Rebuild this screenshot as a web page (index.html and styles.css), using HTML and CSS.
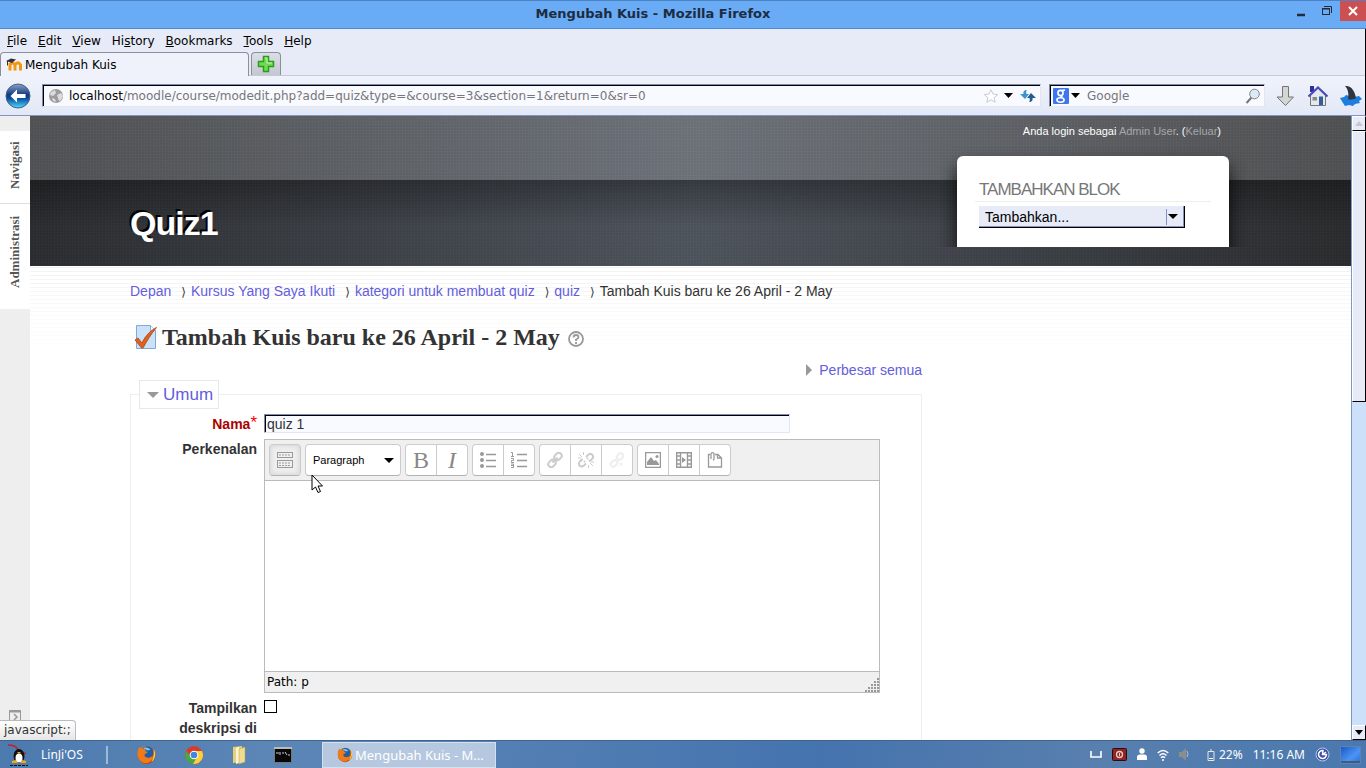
FILE: index.html
```
<!DOCTYPE html>
<html lang="id">
<head>
    <meta charset="UTF-8">
    <meta name="viewport" content="width=device-width, initial-scale=1.0">
    <title>Mengubah Kuis</title>
    <link rel="stylesheet" href="styles.css">
</head>
<body>
    <!-- shared icons -->
    <svg width="0" height="0" class="defs" aria-hidden="true">
        <defs>
            <radialGradient id="fox" cx="40%" cy="35%"><stop offset="0" stop-color="#ffd54a"/><stop offset=".6" stop-color="#f58a1f"/><stop offset="1" stop-color="#c8400c"/></radialGradient>
            <linearGradient id="blue" x1="0" y1="0" x2="0" y2="1"><stop offset="0" stop-color="#8fa3c4"/><stop offset=".45" stop-color="#0d3a83"/><stop offset=".6" stop-color="#0a4c9e"/><stop offset="1" stop-color="#4be0ff"/></linearGradient>
            <linearGradient id="screen" x1="0" y1="0" x2="1" y2="1"><stop offset="0" stop-color="#1a55c4"/><stop offset=".6" stop-color="#4c94f4"/><stop offset="1" stop-color="#2a6ad8"/></linearGradient>
            <symbol id="firefox" viewBox="0 0 20 20">
                <circle cx="10" cy="10" r="9" fill="url(#fox)"/>
                <circle cx="10.5" cy="7.5" r="6.3" fill="#1d5fa8"/>
                <path d="M7 3c3-1 6 0 7 2-2 0-3 1-4 0s-2 0-3-2z" fill="#7fc4ee"/>
                <path d="M2 4c0-1 1-2 1-2l2 2c2-1 4 0 4 2l2 1c0 2-3 1-3 3 0 3 5 4 8 1 1 2-1 6-5 7C5 19 1 14 1 9c0-2 0-4 1-5z" fill="#f07a18"/>
                <path d="M17 4c3 4 2 10-2 13 1-3 3-6 2-13z" fill="#ffcf3a"/>
            </symbol>
        </defs>
    </svg>

    <header class="titlebar">
        <h1 class="window-title">Mengubah Kuis - Mozilla Firefox</h1>
        <div class="window-buttons">
            <button class="win-btn" aria-label="Minimize"><svg width="12" height="12"><path d="M2 10h8" stroke="#222c38" stroke-width="2.5"/></svg></button>
            <button class="win-btn" aria-label="Restore"><svg width="12" height="12" fill="none" stroke="#222c38"><path d="M3 1.500h7.500V8"/><rect x="1.500" y="3.500" width="7" height="6"/><path d="M1 4h8"/></svg></button>
            <button class="win-btn close" aria-label="Close"><svg width="10" height="10"><path d="M1 1l8 8M9 1l-8 8" stroke="#fff" stroke-width="2"/></svg></button>
        </div>
    </header>

    <div class="chrome">
        <nav class="menubar">
            <a href="#"><u>F</u>ile</a>
            <a href="#"><u>E</u>dit</a>
            <a href="#"><u>V</u>iew</a>
            <a href="#">Hi<u>s</u>tory</a>
            <a href="#"><u>B</u>ookmarks</a>
            <a href="#"><u>T</u>ools</a>
            <a href="#"><u>H</u>elp</a>
        </nav>

        <div class="tabs">
            <div class="tab">
                <svg width="17" height="16" viewBox="0 0 17 16"><path d="M4 13.500V6M4 8q2.500-4 5 0V13.500M9 8q3-4.500 5.500 0V13.500" fill="none" stroke="#f2960f" stroke-width="3"/><path d="M0 4l5-2.500 5 1L6 6z" fill="#333"/><path d="M1.500 4v4.500" stroke="#333"/></svg>
                <span>Mengubah Kuis</span>
            </div>
            <button class="new-tab" aria-label="New tab"><svg width="18" height="18"><path d="M6.500 1.500h5v5h5v5h-5v5h-5v-5h-5v-5h5z" fill="#6fdc4f" stroke="#2c9c1c" stroke-width="1.500"/><path d="M8 3h2v5h5" fill="none" stroke="#c5f6b4"/></svg></button>
        </div>

        <div class="navbar">
            <button class="icon-btn" aria-label="Back"><svg width="26" height="26"><circle cx="13" cy="13" r="12" fill="url(#blue)" stroke="#4a5d85"/><path d="M12 6.500L5.500 13l6.500 6.500v-4.500h8.500v-4H12z" fill="#fff"/></svg></button>
            <div class="urlbar">
                <svg width="16" height="16"><circle cx="8" cy="8" r="7" fill="#9c9c9c"/><path d="M3 4l4-2 1 3-3 3-3-1zM9 7l4-2 2 3-2 4-2 1-1-3zM4 10l3 1 1 3-3-1z" fill="#dcdcdc"/></svg>
                <span class="url">localhost<span>/moodle/course/modedit.php?add=quiz&amp;type=&amp;course=3&amp;section=1&amp;return=0&amp;sr=0</span></span>
                <svg width="16" height="16" viewBox="0 0 18 17"><path d="M9 1.500l2.200 4.800 5.300.6-4 3.500 1.200 5.100L9 12.800l-4.700 2.700 1.200-5.100-4-3.500 5.300-.6z" fill="#fff" stroke="#c4c4c4"/></svg>
                <svg width="9" height="5"><path d="M0 0h9L4.500 5z"/></svg>
                <svg width="16" height="14" class="reload"><path d="M7 1C4 1 3 3 3.500 5H0l5 5 4-5H6.500C6 3 6 2 7 1z" fill="#3c93cf"/><path d="M9 13c3 0 4-2 3.500-4H16l-5-5-4 5h2.500c.5 2 .5 3-.5 4z" fill="#1f5b96"/></svg>
            </div>
            <div class="searchbar">
                <svg width="16" height="16"><rect width="16" height="16" rx="1" fill="#3f76ee"/><g fill="none" stroke="#fff" stroke-width="1.600"><circle cx="7.500" cy="5" r="2.600"/><path d="M9 2.600l3-.6M7.500 7.800l2 1.600"/><ellipse cx="7.500" cy="12" rx="3.600" ry="2.200"/></g></svg>
                <svg width="9" height="6"><path d="M0 0h9L4.500 5z"/></svg>
                <input type="text" placeholder="Google" aria-label="Search">
                <svg width="16" height="16"><path d="M6.500 9.500L1.500 15" stroke="#777" stroke-width="2"/><circle cx="9.500" cy="6" r="4.800" fill="#dceaf8" stroke="#888"/></svg>
            </div>
            <button class="icon-btn" aria-label="Downloads"><svg width="20" height="24"><path d="M6.500 2.500h6v10.500h5L9.500 21.500 1 13h5.500z" fill="#d4d6d4" stroke="#757575"/></svg></button>
            <button class="icon-btn" aria-label="Home"><svg width="22" height="22"><path d="M3.500 10v10.500h15V10L11 3z" fill="#e6e8ee" stroke="#777"/><path d="M3 1h4v6H3z" fill="#2f2f9c"/><path d="M1.500 11.500L11 2.500l9.500 9" fill="none" stroke="#4a4ab8" stroke-width="2.200"/><path d="M12 11.500h4v8.500h-4z" fill="#315f9c"/><path d="M5.500 12h4.500v3.500H5.500z" fill="#888"/></svg></button>
            <button class="icon-btn" aria-label="Shark"><svg width="22" height="22"><path d="M0 13l4-1 2-2 8 2 5-1 3 3-3 2 1 2-5 1-2 2-4-1-4 1-2-3z" fill="#1c7fe0"/><path d="M5 1c6-1 10 5 11 12-2 1.500-6 2-8 1C9 9 8 4 5 1z" fill="#30343c"/></svg></button>
        </div>
    </div>

    <div class="viewport">
        <aside class="dock">
            <button class="dock-item">Navigasi</button>
            <button class="dock-item">Administrasi</button>
            <svg class="dock-toggle" width="12" height="12"><path d="M.5.500h11v11H.5z" fill="none" stroke="#999"/><path d="M0 1.500h12" stroke="#999" stroke-width="2"/><path d="M5 4l3 3-3 3" fill="none" stroke="#999" stroke-width="1.500"/></svg>
        </aside>

        <main class="page">
            <div class="page-header">
                <div class="course">
                    <h2>Quiz1</h2>
                </div>
                <div class="header-side">
                    <p class="login">Anda login sebagai <a href="#">Admin User</a>. (<a href="#">Keluar</a>)</p>
                    <div class="block-wrap">
                        <section class="block">
                            <h3>TAMBAHKAN BLOK</h3>
                            <div class="block-select">
                                <select aria-label="Tambahkan blok"><option>Tambahkan...</option></select>
                            </div>
                        </section>
                    </div>
                </div>
            </div>

            <div class="content">
                <nav class="breadcrumb">
                    <a href="#">Depan</a><span>⟩</span><a href="#">Kursus Yang Saya Ikuti</a><span>⟩</span><a href="#">kategori untuk membuat quiz</a><span>⟩</span><a href="#">quiz</a><span>⟩</span>Tambah Kuis baru ke 26 April - 2 May
                </nav>

                <div class="heading">
                    <svg width="24" height="26"><path d="M2.500 1.500h14l5 5v18h-19z" fill="#c9e2f8" stroke="#7fa8dc"/><path d="M16.500 1.500v5h5" fill="#fff" stroke="#7fa8dc"/><path d="M1 16l3-2 4 5C11 12 17 6 22.500 3.500 17 10 13 17 9 24H7.500z" fill="#e0601c" stroke="#a8481c" stroke-width=".8"/></svg>
                    <h2>Tambah Kuis baru ke 26 April - 2 May</h2>
                    <svg width="16" height="16" class="help"><circle cx="8" cy="8" r="7" fill="#fff" stroke="#999" stroke-width="1.800"/><path d="M5.500 6.500q0-2.500 2.500-2.500t2.500 2.200Q10.500 7.500 8 8.500V10M8 11v2" fill="none" stroke="#999" stroke-width="1.800"/></svg>
                </div>

                <div class="expand"><svg width="6" height="12"><path d="M0 0l6 6-6 6z" fill="#999"/></svg><a href="#">Perbesar semua</a></div>

                <fieldset>
                    <legend><svg width="12" height="6"><path d="M0 0h12L6 6z" fill="#999"/></svg><a href="#">Umum</a></legend>

                    <div class="field">
                        <label class="required" for="name">Nama<sup>*</sup></label>
                        <input type="text" id="name" value="quiz 1">
                    </div>

                    <div class="field">
                        <label for="intro">Perkenalan</label>
                        <div class="editor">
                            <div class="toolbar">
                                <div class="group">
                                    <button class="pressed" aria-label="Toggle toolbar"><svg width="16" height="16" fill="none" stroke="#999"><rect x=".5" y=".5" width="15" height="5"/><rect x=".5" y="8.500" width="15" height="7"/><path d="M2 3h12M2 11h12M2 13.500h12" stroke-dasharray="2 1"/></svg></button>
                                </div>
                                <div class="group format">
                                    <select aria-label="Format"><option>Paragraph</option></select>
                                </div>
                                <div class="group">
                                    <button class="letter">B</button>
                                    <button class="letter"><i>I</i></button>
                                </div>
                                <div class="group">
                                    <button aria-label="Bullets"><svg width="16" height="16"><path d="M6 2.500h10M6 8.500h10M6 14.500h10" stroke="#999" stroke-width="1.500"/><g fill="#999"><circle cx="2" cy="2" r="2"/><circle cx="2" cy="8" r="2"/><circle cx="2" cy="14" r="2"/></g></svg></button>
                                    <button aria-label="Numbers"><svg width="16" height="16" fill="none" stroke="#999"><path d="M6 2.500h10M6 8.500h10M6 14.500h10" stroke-width="1.500"/><path d="M0 .5h1.500V4M0 4.500h3M0 6.500h2.500v2H.5v2H3M0 12h2.500v3.500H0M0 13.500h2"/></svg></button>
                                </div>
                                <div class="group">
                                    <button aria-label="Link"><svg width="16" height="16" fill="none" stroke="#ccc" stroke-width="2"><rect x="7" y="1.500" width="8" height="6" rx="3" transform="rotate(-45 11 4.500)"/><rect x="1" y="8.500" width="8" height="6" rx="3" transform="rotate(-45 5 11.500)"/><path d="M5.500 10.500l5-5"/></svg></button>
                                    <button aria-label="Unlink"><svg width="16" height="16" fill="none" stroke="#ccc" stroke-width="2"><path d="M8 5l2.500-2.500q2.500-1.500 4 .5t-.5 4L11 9.500M8 11.500L5.500 14q-2.500 1-4-.5t.5-4L4.500 7M6 10l1-1M9 7l1-1"/><path d="M1 2l3 3M5.500 0v3M0 6h3M12 11l3 3M10.500 13v3M13 10h3" stroke-width="1"/></svg></button>
                                    <button aria-label="Prevent autolink"><svg width="16" height="16" fill="none" stroke="#eee" stroke-width="2"><rect x="7.500" y="2" width="7" height="5" rx="2.500" transform="rotate(-45 11 4.500)"/><rect x="1.500" y="9" width="7" height="5" rx="2.500" transform="rotate(-45 5 11.500)"/><path d="M10 10l4 4M14 10l-4 4" stroke-width="1"/></svg></button>
                                </div>
                                <div class="group">
                                    <button aria-label="Image"><svg width="16" height="16"><path d="M.5.500h15v15H.5z" fill="none" stroke="#999" stroke-width="1.500"/><path d="M2 13V10l4-5 3 4 2-1 3 4v1z" fill="#999"/><circle cx="12" cy="4.500" r="1.500" fill="#999"/></svg></button>
                                    <button aria-label="Media"><svg width="16" height="16"><path d="M.7.700h14.600v14.600H.7zM4.500 0v16M11.500 0v16" fill="none" stroke="#999" stroke-width="1.400"/><path d="M0 4h4.500M0 8h4.500M0 12h4.500M11.500 4H16M11.500 8H16M11.500 12H16" stroke="#999" stroke-width="1.400"/><path d="M6 5l4 3-4 3z" fill="#999"/></svg></button>
                                    <button aria-label="Files"><svg width="16" height="16" fill="none" stroke="#999" stroke-width="1.300"><path d="M3 2.500H1.500v12.500h13V6l-3.500-3.500H8M10.500 2.500V6h4"/><path d="M4 7V2Q4 .7 5.500.7T7 2v5q0 1-1 1"/></svg></button>
                                </div>
                            </div>
                            <textarea id="intro"></textarea>
                            <div class="path">
                                <span>Path: p</span>
                                <svg width="14" height="14" fill="#999"><path d="M12 0h2v2h-2zM9 3h2v2H9zM12 3h2v2h-2zM6 6h2v2H6zM9 6h2v2H9zM12 6h2v2h-2zM3 9h2v2H3zM6 9h2v2H6zM9 9h2v2H9zM12 9h2v2h-2zM0 12h2v2H0zM3 12h2v2H3zM6 12h2v2H6zM9 12h2v2H9zM12 12h2v2h-2z"/></svg>
                            </div>
                        </div>
                    </div>

                    <div class="field">
                        <label for="showdesc">Tampilkan deskripsi di</label>
                        <input type="checkbox" id="showdesc">
                    </div>
                </fieldset>
            </div>
        </main>

        <div class="scrollbar">
            <div class="scroll-btn"><svg width="8" height="5"><path d="M0 5h8L4 0z" fill="#c5c8d2"/></svg></div>
            <div class="thumb"></div>
            <div class="scroll-btn down"><svg width="8" height="5"><path d="M0 0h8L4 5z"/></svg></div>
        </div>

        <div class="status">javascript:;</div>
        <svg class="cursor" width="13" height="20"><path d="M1 1v15l3.500-3 2.500 5.500 2.500-1L7 12h4.500z" fill="#fff" stroke="#000"/></svg>
    </div>

    <footer class="taskbar">
        <button class="start">
            <svg width="22" height="24"><path d="M1 2q8 0 10 5t8 3" fill="none" stroke="#c0202c" stroke-width="1.500"/><ellipse cx="12" cy="13" rx="5.500" ry="7" fill="#111"/><ellipse cx="12" cy="15" rx="3.500" ry="4.500" fill="#fff"/><path d="M10 9h4l-2 2zM5 18l4-1 2 3H5zM19 18l-4-1-2 3h6z" fill="#f5a81c"/><path d="M3 22.500h18" stroke="#111" stroke-dasharray="3 1"/></svg>
            <span>LinJi'OS</span>
        </button>
        <div class="launchers">
            <button class="icon-btn" aria-label="Firefox"><svg width="21" height="20"><use href="#firefox"/></svg></button>
            <button class="icon-btn" aria-label="Chrome"><svg width="20" height="20"><circle cx="10" cy="10" r="9" fill="#d93a2c"/><path d="M2 6A9 9 0 0 0 9 19l4-7-6-1z" fill="#48a848"/><path d="M12 6h6a9 9 0 0 1-9 13l4-7z" fill="#fad03c"/><circle cx="10" cy="10" r="4.300" fill="#fff"/><circle cx="10" cy="10" r="3.300" fill="#4285e0"/></svg></button>
            <button class="icon-btn" aria-label="Files"><svg width="16" height="20"><path d="M2 2l9-1v16l-9 1z" fill="#e9cf77"/><path d="M5 3l3-1v16l-3 1z" fill="#fff7d2"/><path d="M8 4l6-2v15l-6 2z" fill="#f0dc90" stroke="#b79c4c" stroke-width=".5"/></svg></button>
            <button class="icon-btn" aria-label="Terminal"><svg width="18" height="16"><path d="M.5.500h17v15H.5z" fill="#080808" stroke="#777"/><path d="M0 1h18" stroke="#bbb" stroke-width="2"/><path d="M2 6h3M6 5v3M8 6h2M11 5l2 3M14 8h2" stroke="#ccc"/></svg></button>
        </div>
        <button class="task"><svg width="16" height="16" viewBox="0 0 20 20"><use href="#firefox" width="20" height="20"/></svg><span>Mengubah Kuis - M...</span></button>
        <div class="tray">
            <svg width="12" height="7"><path d="M1 0v6h10V0" fill="none" stroke="#fff" stroke-width="1.600"/></svg>
            <svg width="15" height="13"><rect x=".5" y=".5" width="14" height="12" rx="1" fill="#8f2422" stroke="#241010"/><circle cx="7.500" cy="6.500" r="3" fill="none" stroke="#ecc" stroke-width="1.300"/><path d="M7.500 5v3" stroke="#ecc"/></svg>
            <svg width="10" height="13" fill="#fff"><circle cx="5" cy="3" r="2.700"/><path d="M0 12V9q0-2.500 3-2.500h4q3 0 3 2.500v3z"/></svg>
            <svg width="12" height="12" fill="none" stroke="#fff" stroke-width="1.500"><path d="M.7 4q5.300-5 10.600 0M2.500 6.500q3.500-3.500 7 0M4 8.800q2-2 4 0M5 11h2"/></svg>
            <svg width="10" height="13"><path d="M0 4h3l4-4v13L3 9H0z" fill="#8d8d8b"/><path d="M8 3q2 3 0 6" fill="none" stroke="#a9c2e0"/></svg>
            <span class="battery"><svg width="8" height="12"><path d="M1 2.500h6v9H1zM3 1h2" fill="none" stroke="#e6e6dc"/><path d="M2 9.500h4" stroke="#fff"/></svg>22%</span>
            <span>11:16 AM</span>
            <svg width="15" height="15"><circle cx="7.500" cy="7.500" r="6.500" fill="#3c4fa8" stroke="#b8c6ec"/><path d="M8 3.500a4 4 0 1 0 3.500 4H7.500zM7 8l4-3" fill="none" stroke="#fff" stroke-width="1.500"/></svg>
            <svg width="21" height="18"><path d="M.5.500h20v17H.5z" fill="url(#screen)" stroke="#5b84b4"/><path d="M1 16h19" stroke="#3f5c78" stroke-width="2"/></svg>
        </div>
    </footer>
</body>
</html>
```
FILE: styles.css
```
* {
  box-sizing: border-box;
}

body {
  margin: 0;
  height: 100vh;
  display: flex;
  flex-direction: column;
  overflow: hidden;
  font-family: "Liberation Sans", Arial, sans-serif;
  font-size: 14px;
  color: #333;
}

h1, h2, h3, p {
  margin: 0;
}

a {
  color: #635dde;
  text-decoration: none;
}

button {
  border: none;
  padding: 0;
  background: none;
  font-family: inherit;
}

svg {
  display: block;
  flex: none;
}

.defs {
  position: absolute;
}

/* window */
.titlebar {
  display: flex;
  height: 29px;
  flex: none;
  background: #6aabf6;
  border-top: 1px solid #4a82c4;
  border-bottom: 1px solid #5088cc;
}

.window-title {
  flex: 1;
  padding-left: 18px;
  text-align: center;
  font: bold 13px/26px "DejaVu Sans", sans-serif;
  color: #1d2c3f;
}

.window-buttons {
  display: flex;
  height: 20px;
}

.win-btn {
  width: 26px;
  display: flex;
  align-items: center;
  justify-content: center;
}

.win-btn.close {
  background: #cc5052;
}

.chrome {
  height: 87px;
  flex: none;
  display: flex;
  flex-direction: column;
  background: #e7ebf7;
  border-right: 1px solid #000;
  border-bottom: 1px solid #8492c4;
  font: 12px "DejaVu Sans", sans-serif;
  color: #000;
}

.menubar {
  display: flex;
  gap: 11px;
  height: 23px;
  padding: 0 7px;
  line-height: 25px;
}

.menubar a {
  color: #000;
}

.tabs {
  display: flex;
  gap: 2px;
  height: 24px;
  border-bottom: 1px solid #c5c9da;
}

.tab {
  width: 249px;
  height: 24px;
  display: flex;
  align-items: center;
  gap: 2px;
  padding-left: 5px;
  background: #eff2fb;
  border: 1px solid #8d8f97;
  border-bottom: none;
  border-radius: 4px 4px 0 0;
}

.new-tab {
  width: 30px;
  height: 23px;
  display: flex;
  align-items: center;
  justify-content: center;
  background: linear-gradient(#dcdfe7, #c4c7d0);
  border: 1px solid #8d8f97;
  border-bottom: none;
  border-radius: 4px 4px 0 0;
}

.navbar {
  flex: 1;
  display: flex;
  align-items: center;
  gap: 11px;
  padding: 0 3px 0 5px;
  background: linear-gradient(#f0f3fb, #e2e8f6);
}

/* sunken text boxes */
.urlbar,
.searchbar,
.field input[type="text"] {
  background: #f8faff;
  border: 1px solid #e3e6f2;
  border-top-color: #7c8cb4;
  border-left-color: #7c8cb4;
  box-shadow: inset 1px 1px #000;
}

.urlbar,
.searchbar {
  height: 23px;
  display: flex;
  align-items: center;
}

.urlbar {
  flex: 1;
  gap: 5px;
  padding: 0 4px 0 5px;
}

.url {
  flex: 1;
}

.url span {
  color: #777;
}

.reload {
  margin-left: 2px;
}

.searchbar {
  width: 216px;
  padding: 0 3px;
  gap: 2px;
}

.urlbar + .searchbar {
  margin-left: -3px;
}

.searchbar input {
  flex: 1;
  min-width: 0;
  margin-left: 5px;
  padding: 0;
  border: none;
  background: none;
  font: inherit;
}

.searchbar input::placeholder {
  color: #777;
}

.icon-btn {
  display: flex;
}

/* browser content */
.viewport {
  position: relative;
  flex: 1;
  min-height: 0;
  display: flex;
  background: #fff;
}

.dock {
  width: 30px;
  padding-top: 15px;
  display: flex;
  flex-direction: column;
  background: #eee;
}

/* rotated, so the top border is drawn below the item */
.dock-item {
  height: 73px;
  border-top: 1px solid #ddd;
  background: #fff;
  writing-mode: vertical-rl;
  rotate: 180deg;
  padding-top: 4px;
  font: bold 13px "Liberation Serif", serif;
  color: #555;
}

.dock-item + .dock-item {
  height: 105px;
  padding-top: 9px;
  border-top: none;
}

.dock-toggle {
  margin: auto 0 18px 9px;
}

.page {
  flex: 1;
  min-width: 0;
  overflow: hidden;
  background: linear-gradient(rgba(255, 255, 255, 0) 150px, #fff 240px), repeating-linear-gradient(#fff 0 3px, #f3f3f3 3px 4px);
}

.page-header {
  height: 150px;
  display: flex;
  justify-content: space-between;
  padding: 0 122px 0 100px;
  background:
    repeating-linear-gradient(0deg, rgba(255, 255, 255, 0.01) 0 1px, rgba(0, 0, 0, 0.02) 1px 3px),
    repeating-linear-gradient(90deg, rgba(255, 255, 255, 0.01) 0 1px, rgba(0, 0, 0, 0.02) 1px 3px),
    linear-gradient(rgba(255, 255, 255, 0.18) 64px, rgba(0, 0, 0, 0.32) 64px, rgba(0, 0, 0, 0) 110px),
    linear-gradient(90deg, #2b2d30, #4f555e 50%, #2b2c2e);
}

.course {
  padding-top: 87px;
}

.course h2 {
  font-size: 34px;
  line-height: 40px;
  letter-spacing: -1px;
  color: #fff;
  text-shadow: -2px -2px 0 #000;
}

.header-side {
  width: 290px;
  display: flex;
  flex-direction: column;
}

.login {
  padding: 8px 8px 0 0;
  text-align: right;
  font-size: 11px;
  line-height: 14px;
  color: #fff;
}

.login a {
  color: #a6a6a8;
}

.block-wrap {
  margin-top: 8px;
  padding: 10px 18px 0 18px;
  height: 101px;
  overflow: hidden;
  margin-right: -18px;
  align-self: flex-end;
}

.block {
  width: 272px;
  height: 100px;
  padding: 22px 18px;
  background: #fff;
  border-radius: 6px;
  box-shadow: 0 10px 18px rgba(0, 0, 0, 0.8);
}

.block h3 {
  padding: 0 4px;
  border-bottom: 1px solid #eee;
  font-size: 17px;
  line-height: 23px;
  font-weight: normal;
  letter-spacing: -1px;
  color: #777;
}

.block-select {
  position: relative;
  width: 206px;
  margin: 4px;
}

.block-select::before {
  content: "";
  position: absolute;
  right: 18px;
  top: 3px;
  bottom: 3px;
  border-left: 1px solid #8792c0;
}

.block-select::after,
.format::after {
  content: "";
  position: absolute;
  right: 7px;
  top: 8px;
  border: 5px solid transparent;
  border-top-color: #000;
  border-bottom: none;
}

select {
  appearance: none;
  width: 100%;
  border: none;
  color: #000;
}

.block-select select {
  height: 22px;
  padding: 0 6px;
  background: #e7ebf7;
  border-right: 1px solid #000;
  border-bottom: 1px solid #000;
  box-shadow: inset -1px -1px #8792c0;
  font: 14px "Liberation Sans", sans-serif;
}

.content {
  max-width: 892px;
  padding: 14px 0 0 100px;
}

.breadcrumb {
  line-height: 22px;
  white-space: nowrap;
}

.breadcrumb span {
  margin: 0 5px 0 10px;
  font: 12px "DejaVu Sans", sans-serif;
}

.heading {
  display: flex;
  align-items: center;
  gap: 4px;
  padding: 20px 0 0 4px;
}

.heading h2 {
  font: bold 24px/30px "Liberation Serif", serif;
  white-space: nowrap;
}

.help {
  margin: 4px 0 0 4px;
}

.expand {
  display: flex;
  justify-content: flex-end;
  align-items: center;
  gap: 7px;
  padding-top: 8px;
  line-height: 20px;
}

fieldset {
  margin: 0;
  padding: 5px 41px 0 0;
  border: 1px solid #eee;
  min-width: 0;
}

legend {
  display: flex;
  align-items: center;
  gap: 4px;
  margin-left: 8px;
  padding: 0 5px 0 7px;
  border: 1px solid #e8e8e8;
  background: #fff;
  font-size: 17px;
  line-height: 27px;
}

.field {
  display: flex;
  gap: 7px;
  margin-bottom: 5px;
}

.field label {
  width: 126px;
  text-align: right;
  font-weight: bold;
  line-height: 20px;
}

label.required {
  color: #a00;
}

.required sup {
  font-size: 17px;
  line-height: 0;
  vertical-align: 1px;
  font-weight: normal;
  color: #f00;
}

.field input[type="text"] {
  width: 526px;
  height: 19px;
  padding: 0 2px;
  font: 14px "Liberation Sans", sans-serif;
  color: #333;
}

.field input[type="checkbox"] {
  appearance: none;
  width: 13px;
  height: 13px;
  margin: 2px 0;
  border: 1px solid #000;
  background: #fff;
}

.editor {
  flex: 1;
  border: 1px solid #bbb;
}

.toolbar {
  display: flex;
  gap: 4px;
  padding: 4px;
  background: #f0f0f0;
  border-bottom: 1px solid #bbb;
}

.group {
  position: relative;
  display: flex;
  height: 32px;
  border: 1px solid #ccc;
  border-bottom-color: #b3b3b3;
  border-radius: 4px;
  background: #fff;
  overflow: hidden;
}

.group button {
  width: 30px;
  display: flex;
  align-items: center;
  justify-content: center;
}

.group button + button {
  width: 31px;
  border-left: 1px solid #ccc;
}

.group .pressed {
  background: #f0f0f0;
  box-shadow: inset 0 0 6px #ccc;
}

.group .letter {
  font: 24px "Liberation Serif", serif;
  color: #888;
}

.format {
  width: 96px;
}

.format::after {
  top: 13px;
  right: 6px;
}

.format select {
  padding: 0 7px;
  background: none;
  font: 11px "Liberation Sans", sans-serif;
}

textarea {
  display: block;
  width: 100%;
  height: 190px;
  border: none;
  resize: none;
}

.path {
  display: flex;
  justify-content: space-between;
  align-items: flex-end;
  height: 21px;
  padding-left: 2px;
  border-top: 1px solid #bbb;
  background: #f0f0f0;
  font: 12px/20px "DejaVu Sans", sans-serif;
  color: #000;
}

.scrollbar {
  width: 15px;
  display: flex;
  flex-direction: column;
  background: #cde0f9;
  border-left: 1px solid #7a9ac4;
}

.scroll-btn,
.thumb {
  background: #e7ebf7;
  border: 1px solid #fff;
  border-right: 1px solid #000;
  border-bottom: 1px solid #000;
}

.scroll-btn {
  height: 15px;
  display: flex;
  align-items: center;
  justify-content: center;
}

.thumb {
  height: 271px;
}

.down {
  margin-top: auto;
}

.status {
  position: absolute;
  left: 0;
  bottom: 0;
  padding: 0 4px;
  background: linear-gradient(#fff, #e6e6e6);
  border: 1px solid #bbb;
  border-left: none;
  border-bottom: none;
  border-radius: 0 4px 0 0;
  font: 12px/19px "DejaVu Sans", sans-serif;
}

.cursor {
  position: absolute;
  left: 311px;
  top: 358px;
}

/* desktop panel */
.taskbar {
  height: 28px;
  flex: none;
  display: flex;
  align-items: center;
  background: linear-gradient(100deg, #4d7aae, #5b86b6 20%, #5480b4 35%, #4573ae 60%, #587fae 80%, #4a78ae);
  border-top: 1px solid #3f658f;
  font: 13px "Noto Sans", sans-serif;
  color: #fff;
}

.start {
  width: 108px;
  height: 18px;
  display: flex;
  align-items: center;
  gap: 12px;
  padding-left: 7px;
  border-right: 2px solid #9db9d8;
  font-size: 12px;
  color: #fff;
}

.launchers {
  display: flex;
  align-items: center;
  gap: 27px;
  width: 214px;
  padding-left: 28px;
}

.task {
  width: 174px;
  height: 26px;
  display: flex;
  align-items: center;
  gap: 2px;
  padding-left: 14px;
  background: #b5c8df;
  border: 1px solid #d5e0ee;
  font-size: 13px;
  color: #fff;
}

.tray {
  display: flex;
  align-items: center;
  gap: 10px;
  margin-left: auto;
  padding-right: 5px;
  font-size: 12px;
}

.battery {
  display: flex;
  align-items: center;
  gap: 4px;
  margin-left: 8px;
}
```
